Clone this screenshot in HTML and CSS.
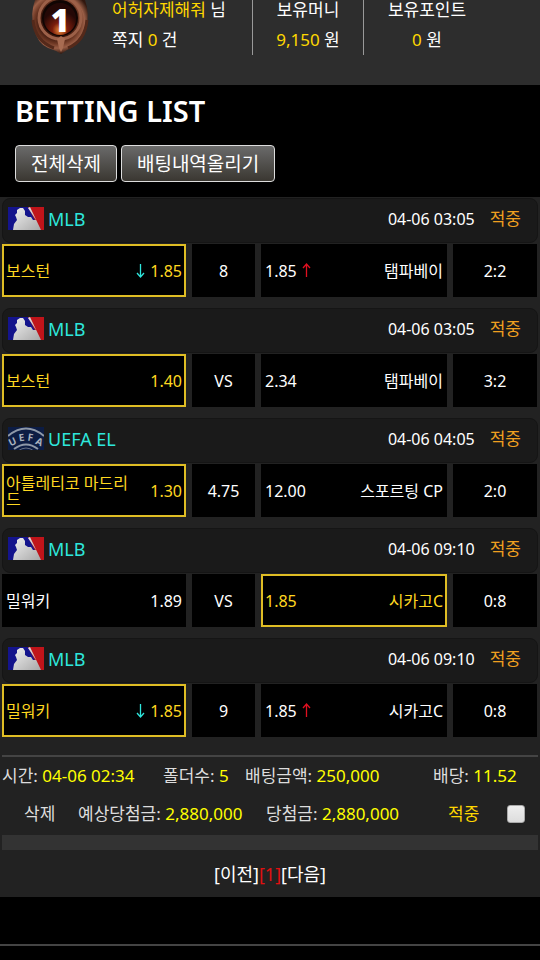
FILE: index.html
```
<!DOCTYPE html>
<html lang="ko">
<head>
    <meta charset="UTF-8">
    <meta name="viewport" content="width=device-width, initial-scale=1.0">
    <title>Betting List</title>
    <link rel="stylesheet" href="styles.css">
</head>
<body>
    <svg class="defs" aria-hidden="true">
        <defs>
            <linearGradient id="silver" x1="0" y1="0" x2="1" y2="1">
                <stop offset="0" stop-color="#f2f2f2"/>
                <stop offset="1" stop-color="#a8a8a8"/>
            </linearGradient>
            <radialGradient id="bronze" cx="0.45" cy="0.4" r="0.6">
                <stop offset="0.5" stop-color="#3a160c"/>
                <stop offset="0.68" stop-color="#6e3824"/>
                <stop offset="0.82" stop-color="#9a5e46"/>
                <stop offset="1" stop-color="#32180f"/>
            </radialGradient>
            <radialGradient id="ember" cx="0.5" cy="0.85" r="0.6">
                <stop offset="0" stop-color="#f09038"/>
                <stop offset="0.4" stop-color="#7a1d0c"/>
                <stop offset="1" stop-color="#240806"/>
            </radialGradient>
        </defs>
        <symbol id="mlb" viewBox="0 0 36 23">
            <rect width="36" height="23" fill="#14148c"/>
            <path d="M20 0H36V23H32Z" fill="#c0141a"/>
            <path d="M5 23L6 17L9 13L8 10L7 8L9 6L9 3L12 1H15L17 4L17 8L20 10L23 10L25 13L28 13L20 1L22 0L33 23Z" fill="url(#silver)"/>
        </symbol>
    </svg>

    <header class="user-bar">
        <svg class="medal" viewBox="0 0 60 55" role="img" aria-label="1">
            <path d="M5 0H55Q60 14 56 28Q51 42 43 47Q36 50 31 54Q25 50 18 48Q7 43 4 28Q0 14 5 0Z" fill="url(#bronze)"/>
            <path d="M3 20Q5 41 24 48M57 20Q55 41 38 48" fill="none" stroke="#54291a" stroke-width="3"/>
            <circle cx="30" cy="18" r="21" fill="none" stroke="#9c6048" stroke-width="3"/>
            <circle cx="30" cy="18" r="18" fill="#100503"/>
            <circle cx="30" cy="19" r="16" fill="url(#ember)"/>
            <path d="M27 39L31 36L35 39L33 48L31 52L29 48Z" fill="#a86c52"/>
            <text class="medal-text" x="30" y="32">1</text>
        </svg>
        <div class="user-info">
            <p><span class="gold">어허자제해줘</span> 님</p>
            <p>쪽지 <span class="gold">0</span> 건</p>
        </div>
        <div class="user-info money">
            <p>보유머니</p>
            <p><span class="gold">9,150</span> 원</p>
        </div>
        <div class="user-info point">
            <p>보유포인트</p>
            <p><span class="gold">0</span> 원</p>
        </div>
    </header>

    <section class="title-area">
        <h1>BETTING LIST</h1>
        <div class="buttons">
            <button type="button" class="btn">전체삭제</button>
            <button type="button" class="btn">배팅내역올리기</button>
        </div>
    </section>

    <main class="bet-list">
        <article class="game">
            <div class="game-head">
                <svg class="logo"><use href="#mlb"/></svg>
                <span class="league">MLB</span>
                <span class="date">04-06 03:05</span>
                <span class="result">적중</span>
            </div>
            <div class="game-row">
                <div class="cell picked"><span class="team">보스턴</span><span class="odds"><svg class="arrow down" viewBox="0 0 9 15"><path d="M4.500 1V14M1 10L4.500 14L8 10"/></svg>1.85</span></div>
                <div class="cell center">8</div>
                <div class="cell"><span class="odds">1.85<svg class="arrow up" viewBox="0 0 9 15"><path d="M4.500 14V1M1 5L4.500 1L8 5"/></svg></span><span class="team">탬파베이</span></div>
                <div class="cell center">2:2</div>
            </div>
        </article>

        <article class="game">
            <div class="game-head">
                <svg class="logo"><use href="#mlb"/></svg>
                <span class="league">MLB</span>
                <span class="date">04-06 03:05</span>
                <span class="result">적중</span>
            </div>
            <div class="game-row">
                <div class="cell picked"><span class="team">보스턴</span><span class="odds">1.40</span></div>
                <div class="cell center">VS</div>
                <div class="cell"><span class="odds">2.34</span><span class="team">탬파베이</span></div>
                <div class="cell center">3:2</div>
            </div>
        </article>

        <article class="game">
            <div class="game-head">
                <svg class="logo" viewBox="0 0 36 23">
                    <rect width="36" height="23" fill="#0c1c44"/>
                    <path d="M0 9Q18-6 36 9" fill="none" stroke="#8e98a8" stroke-width="2"/>
                    <path d="M6 22Q18 13 30 22" fill="none" stroke="#8e98a8" stroke-width="2"/>
                    <path d="M10 24Q18 18 26 24" fill="none" stroke="#667084" stroke-width="1"/>
                    <g class="uefa-text">
                        <text x="6" y="18" transform="rotate(-25 6 18)">U</text>
                        <text x="14" y="14" transform="rotate(-8 14 14)">E</text>
                        <text x="22" y="14" transform="rotate(8 22 14)">F</text>
                        <text x="30" y="18" transform="rotate(25 30 18)">A</text>
                    </g>
                </svg>
                <span class="league">UEFA EL</span>
                <span class="date">04-06 04:05</span>
                <span class="result">적중</span>
            </div>
            <div class="game-row">
                <div class="cell picked"><span class="team">아틀레티코 마드리드</span><span class="odds">1.30</span></div>
                <div class="cell center">4.75</div>
                <div class="cell"><span class="odds">12.00</span><span class="team">스포르팅 CP</span></div>
                <div class="cell center">2:0</div>
            </div>
        </article>

        <article class="game">
            <div class="game-head">
                <svg class="logo"><use href="#mlb"/></svg>
                <span class="league">MLB</span>
                <span class="date">04-06 09:10</span>
                <span class="result">적중</span>
            </div>
            <div class="game-row">
                <div class="cell"><span class="team">밀워키</span><span class="odds">1.89</span></div>
                <div class="cell center">VS</div>
                <div class="cell picked"><span class="odds">1.85</span><span class="team">시카고C</span></div>
                <div class="cell center">0:8</div>
            </div>
        </article>

        <article class="game">
            <div class="game-head">
                <svg class="logo"><use href="#mlb"/></svg>
                <span class="league">MLB</span>
                <span class="date">04-06 09:10</span>
                <span class="result">적중</span>
            </div>
            <div class="game-row">
                <div class="cell picked"><span class="team">밀워키</span><span class="odds"><svg class="arrow down" viewBox="0 0 9 15"><path d="M4.500 1V14M1 10L4.500 14L8 10"/></svg>1.85</span></div>
                <div class="cell center">9</div>
                <div class="cell"><span class="odds">1.85<svg class="arrow up" viewBox="0 0 9 15"><path d="M4.500 14V1M1 5L4.500 1L8 5"/></svg></span><span class="team">시카고C</span></div>
                <div class="cell center">0:8</div>
            </div>
        </article>

        <div class="summary">
            <div class="summary-row first">
                <span>시간: <b>04-06 02:34</b></span>
                <span>폴더수: <b>5</b></span>
                <span>배팅금액: <b>250,000</b></span>
                <span>배당: <b>11.52</b></span>
            </div>
            <div class="summary-row second">
                <a href="#">삭제</a>
                <span>예상당첨금: <b>2,880,000</b></span>
                <span>당첨금: <b>2,880,000</b></span>
                <label class="win" for="pick">적중</label>
                <input type="checkbox" id="pick">
            </div>
        </div>
        <div class="bar"></div>

        <nav class="paging"><a href="#">[이전]</a><a href="#" class="current">[1]</a><a href="#">[다음]</a></nav>
    </main>

    <footer class="footer"></footer>
</body>
</html>
```
FILE: styles.css
```
* {
    box-sizing: border-box;
}

body {
    margin: 0;
    background: #000;
    color: #fff;
    font-family: "Noto Sans", "Noto Sans CJK KR", sans-serif;
    font-size: 17px;
    line-height: 18px;
}

a {
    color: inherit;
    text-decoration: none;
}

.defs {
    position: absolute;
    width: 0;
    height: 0;
}

/* user bar */
.user-bar {
    display: flex;
    align-items: flex-start;
    padding: 0 0 30px 30px;
    background: #2d2d2d;
}

.medal {
    width: 60px;
    height: 55px;
    margin-right: 22px;
}

.medal-text {
    font-family: "Open Sans", sans-serif;
    font-size: 32px;
    font-weight: 800;
    fill: #fff;
    text-anchor: middle;
}

.user-info {
    height: 55px;
    width: 140px;
    padding-top: 1px;
}

.user-info p {
    margin: 0 0 12px;
    white-space: nowrap;
}

.money,
.point {
    width: 111px;
    border-left: 1px solid #999;
    text-align: center;
}

.point {
    width: 127px;
}

.gold {
    color: #ffd700;
}

/* title */
.title-area {
    padding: 10px 15px 15px;
}

h1 {
    margin: 0 0 18px;
    font-size: 29px;
    font-weight: 600;
    line-height: 32px;
}

.buttons {
    display: flex;
    gap: 4px;
}

.btn {
    height: 37px;
    padding: 0 15px;
    border: 1px solid #ddd;
    border-radius: 4px;
    background: linear-gradient(#6a6a6a, #3a3731);
    color: #fff;
    font-family: inherit;
    font-size: 19px;
    line-height: 20px;
}

/* games */
.bet-list {
    padding: 1px 2px 0;
    background: #222;
}

.game {
    margin-bottom: 11px;
}

.game-head {
    display: flex;
    align-items: center;
    height: 45px;
    margin-bottom: 1px;
    padding: 0 16px 4px 5px;
    border: 1px solid #151515;
    border-radius: 8px;
    background: #1a1a1a;
}

.logo {
    width: 36px;
    height: 23px;
    margin-right: 4px;
}

.uefa-text {
    fill: #a8b0bc;
    font-size: 10px;
    font-weight: 700;
    text-anchor: middle;
}

.league {
    flex: 1;
    color: #2ee6dc;
    font-size: 18px;
}

.date {
    margin-right: 15px;
    font-size: 16px;
}

.result {
    color: #f0a020;
}

.game-row {
    display: grid;
    grid-template-columns: 184fr 63fr 186fr 84fr;
    gap: 6px;
    padding-right: 1px;
    font-size: 16px;
    line-height: 16px;
}

.cell {
    display: flex;
    align-items: center;
    justify-content: space-between;
    height: 53px;
    padding: 0 2px;
    border: 2px solid #000;
    background: #000;
    word-break: break-all;
}

.cell.center {
    justify-content: center;
}

.picked {
    border-color: #dfbd24;
    color: #ffd820;
}

.team {
    max-width: 122px;
}

.odds {
    display: flex;
    align-items: center;
    gap: 5px;
}

.arrow {
    width: 9px;
    height: 15px;
    fill: none;
    stroke-width: 1.3;
}

.down {
    stroke: #2ee6dc;
}

.up {
    stroke: #e01020;
}

/* summary */
.summary {
    margin-top: 18px;
    border-top: 2px solid #444;
    color: #ddd;
    white-space: nowrap;
}

.summary b {
    color: #ff0;
    font-weight: 400;
}

.summary-row {
    display: grid;
    align-items: center;
    height: 38px;
}

.first {
    grid-template-columns: 161fr 82fr 188fr 105fr;
}

.second {
    grid-template-columns: 54fr 188fr 182fr 59fr 31fr;
    padding-left: 22px;
}

.win {
    color: #ffd700;
}

input[type="checkbox"] {
    appearance: none;
    width: 18px;
    height: 18px;
    margin: 0;
    border: 1px solid #aaa;
    border-radius: 3px;
    background: linear-gradient(#eee, #ddd);
}

input[type="checkbox"]:checked {
    background: #ffd700;
}

.bar {
    height: 15px;
    margin-top: 2px;
    background: #333;
}

.paging {
    padding: 15px 0 14px;
    font-size: 18px;
    text-align: center;
}

.current {
    color: #e01010;
}

.footer {
    margin-top: 47px;
    border-top: 2px solid #444;
}
```
